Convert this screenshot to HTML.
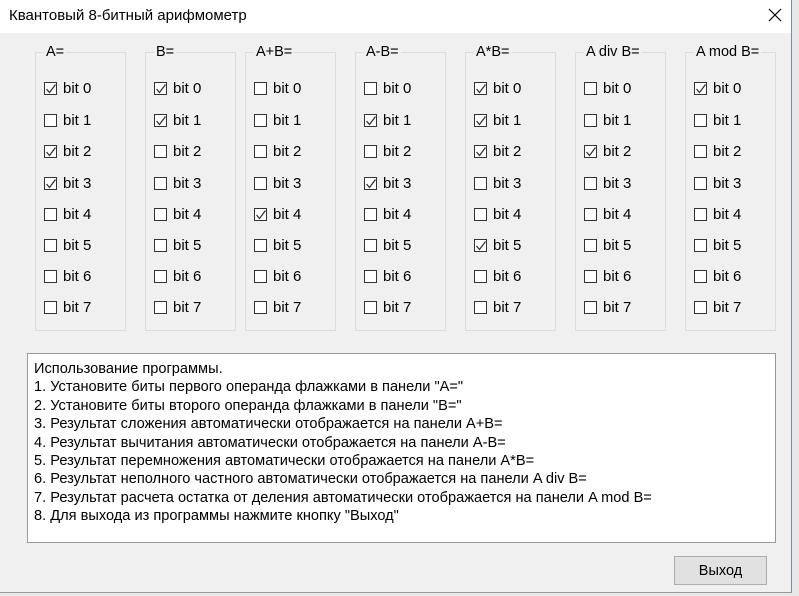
<!DOCTYPE html>
<html><head><meta charset="utf-8"><style>
*{margin:0;padding:0;box-sizing:border-box}
body{width:799px;height:596px;background:#e8e8e8;position:relative;overflow:hidden;font-family:"Liberation Sans",sans-serif;font-size:14.5px;color:#000}
#win{position:absolute;left:0;top:0;width:792px;height:593px;background:#f0f0f0;border-right:1px solid #6f8fb8;border-bottom:1px solid #999}
#title{position:absolute;left:0;top:0;width:791px;height:33px;background:#fff}
#title span{position:absolute;left:9px;top:7px;font-size:15px}
#close{position:absolute;left:768px;top:8px}
.g{position:absolute;top:52px;width:91px;height:279px;border:1px solid #dcdcdc}
.g .l{position:absolute;left:8px;top:-9px;background:#f0f0f0;padding:0 2px;font-size:14.5px}
.cb{position:absolute;left:8px;height:16px}
.cb i{position:absolute;left:0;top:1px;width:13px;height:13px;border:1px solid #333;background:#fff}
.cb b{position:absolute;left:19px;top:-1px;font-weight:normal;white-space:nowrap;font-size:15px}
.cb svg{position:absolute;left:1px;top:2px}
#txt{position:absolute;left:27px;top:353px;width:749px;height:190px;background:#fff;border:1px solid #999;padding:6px 0 0 6px;line-height:18.4px;font-size:14.6px}
#btn{position:absolute;left:674px;top:556px;width:93px;height:29px;background:#e1e1e1;border:1px solid #adadad;text-align:center;line-height:28px;font-size:14.5px}
</style></head><body>
<div id="win">
<div id="title"><span>Квантовый 8-битный арифмометр</span>
<svg id="close" width="14" height="14"><path d="M1 1L13 13M13 1L1 13" stroke="#000" stroke-width="1.2"/></svg></div>
<div id="groups"></div>
<div id="txt">Использование программы.<br>1. Установите биты первого операнда флажками в панели "A="<br>2. Установите биты второго операнда флажками в панели "B="<br>3. Результат сложения автоматически отображается на панели A+B=<br>4. Результат вычитания автоматически отображается на панели A-B=<br>5. Результат перемножения автоматически отображается на панели A*B=<br>6. Результат неполного частного автоматически отображается на панели A div B=<br>7. Результат расчета остатка от деления автоматически отображается на панели A mod B=<br>8. Для выхода из программы нажмите кнопку "Выход"</div>
<div id="btn">Выход</div>
</div>
<script>
var names=["A=","B=","A+B=","A-B=","A*B=","A div B=","A mod B="];
var lefts=[35,145,245,355,465,575,685];
var chk=[[0,2,3],[0,1],[4],[1,3],[0,1,2,5],[2],[0]];
var ys=[88,120,151,183,214,245,276,307];
var h="";
for(var g=0;g<7;g++){
 h+='<div class="g" style="left:'+lefts[g]+'px"><span class="l">'+names[g]+'</span>';
 for(var b=0;b<8;b++){
  var c=chk[g].indexOf(b)>=0;
  h+='<div class="cb" style="top:'+(ys[b]-52-8)+'px"><i></i>'+(c?'<svg width="12" height="12"><path d="M1.5 6L4.5 9.5L10.5 1.5" fill="none" stroke="#333" stroke-width="1.3"/></svg>':'')+'<b>bit '+b+'</b></div>';
 }
 h+='</div>';
}
document.getElementById("groups").innerHTML=h;
</script>
</body></html>
